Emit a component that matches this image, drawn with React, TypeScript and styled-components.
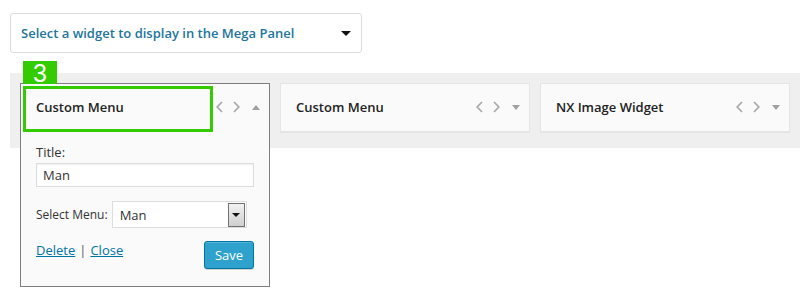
import React from "react";
import styled, { createGlobalStyle } from "styled-components";

const Global = createGlobalStyle`
  html, body { margin: 0; padding: 0; background: #fff; }
  body { font-family: "Open Sans", "Liberation Sans", sans-serif; color: #444; }
  * { box-sizing: border-box; }
`;

const Page = styled.div`
  width: 800px;
  height: 303px;
  overflow: hidden;
  padding-top: 13px;
`;

const TopSelect = styled.div`
  margin-left: 10px;
  width: 352px;
  height: 40px;
  border: 1px solid #dcdcdc;
  border-radius: 3px;
  display: flex;
  align-items: center;
  justify-content: space-between;
  padding: 0 10px 0 10px;
  font-size: 13px;
  font-weight: 600;
  color: #21759b;
`;

const Caret = styled.span<{ $up?: boolean; $color?: string; $w?: number }>`
  display: inline-block;
  width: 0;
  height: 0;
  border-left: ${(p) => (p.$w ?? 10) / 2}px solid transparent;
  border-right: ${(p) => (p.$w ?? 10) / 2}px solid transparent;
  ${(p) =>
    p.$up
      ? `border-bottom: ${Math.round((p.$w ?? 10) / 2)}px solid ${p.$color ?? "#111"};`
      : `border-top: ${Math.round((p.$w ?? 10) / 2)}px solid ${p.$color ?? "#111"};`}
`;

const Band = styled.div`
  margin-top: 20px;
  margin-left: 10px;
  height: 75px;
  background: #efefef;
  padding: 10px 0 0 10px;
  display: flex;
  align-items: flex-start;
  gap: 10px;
`;

const Widget = styled.div<{ $open?: boolean }>`
  position: relative;
  width: 250px;
  flex: none;
  background: #fafafa;
  border: 1px solid ${(p) => (p.$open ? "#7e7e7e" : "#e5e5e5")};
  box-shadow: ${(p) => (p.$open ? "none" : "0 1px 1px rgba(0,0,0,0.04)")};
`;

const Header = styled.div`
  height: 47px;
  display: flex;
  align-items: center;
  padding: 0 9px 1px 15px;
`;

const HeaderTitle = styled.div`
  flex: 1;
  font-size: 13px;
  font-weight: 600;
  color: #222;
`;

const Controls = styled.div`
  display: flex;
  align-items: center;
  gap: 10px;
`;

const Chevron = styled.svg`
  width: 7px;
  height: 12px;
  display: block;
`;

const CaretBox = styled.span`
  display: flex;
  margin-left: 2px;
`;

const Badge = styled.div`
  position: absolute;
  left: 2px;
  top: -23px;
  width: 34px;
  height: 23px;
  background: #33cc00;
  color: #fff;
  font-family: "Liberation Sans", Arial, sans-serif;
  font-size: 25px;
  line-height: 24px;
  text-align: center;
`;

const Highlight = styled.div`
  position: absolute;
  left: 2px;
  top: 2px;
  width: 190px;
  height: 46px;
  border: 3px solid #33cc00;
  pointer-events: none;
`;

const Body = styled.div`
  padding: 13px 15px 17px 15px;
  font-size: 13px;
  color: #333;
`;

const Label = styled.div`
  line-height: 16px;
  margin-bottom: 3px;
`;

const TextInput = styled.div`
  height: 24px;
  border: 1px solid #dddddd;
  background: #fff;
  padding: 0 6px;
  display: flex;
  align-items: center;
  color: #333;
  box-shadow: inset 0 1px 2px rgba(0,0,0,0.07);
`;

const Row = styled.div`
  display: flex;
  align-items: center;
  margin-top: 14px;
  gap: 4px;
`;

const RowLabel = styled.span`
  font-size: 12px;
`;

const SelectBox = styled.div`
  width: 135px;
  height: 27px;
  border: 1px solid #dddddd;
  background: #fff;
  display: flex;
  align-items: center;
  padding-left: 7px;
  padding-right: 1px;
`;

const SelectText = styled.span`
  flex: 1;
`;

const SelectButton = styled.div`
  width: 17px;
  height: 24px;
  border: 1px solid #707070;
  background: linear-gradient(#f2f2f2, #cfcfcf);
  display: flex;
  align-items: center;
  justify-content: center;
`;

const Footer = styled.div`
  display: flex;
  justify-content: space-between;
  align-items: flex-start;
  margin-top: 13px;
`;

const Links = styled.div`
  display: flex;
  gap: 4px;
  color: #555;
  line-height: 18px;
`;

const Link = styled.a`
  color: #0074a2;
  text-decoration: underline;
  cursor: pointer;
`;

const SaveButton = styled.button`
  width: 50px;
  height: 28px;
  margin-top: 0;
  background: #2ea2cc;
  border: 1px solid #0074a2;
  border-radius: 3px;
  color: #fff;
  font-family: "Open Sans", "Liberation Sans", sans-serif;
  font-size: 13px;
  padding: 0;
  box-shadow: inset 0 1px 0 rgba(120,200,230,0.5), 0 1px 0 rgba(0,0,0,0.15);
`;

function ArrowControls({ up }: { up?: boolean }) {
  return (
    <Controls>
      <Chevron viewBox="0 0 7 12">
        <path d="M6 1 L1.2 6 L6 11" fill="none" stroke="#a9a9a9" strokeWidth="1.7" />
      </Chevron>
      <Chevron viewBox="0 0 7 12">
        <path d="M1 1 L5.8 6 L1 11" fill="none" stroke="#a9a9a9" strokeWidth="1.7" />
      </Chevron>
      <CaretBox>
        <Caret $up={up} $color="#a0a0a0" $w={9} />
      </CaretBox>
    </Controls>
  );
}

export default function App() {
  return (
    <Page>
      <Global />
      <TopSelect>
        <span>Select a widget to display in the Mega Panel</span>
        <Caret $w={10} $color="#111" />
      </TopSelect>
      <Band>
        <Widget $open>
          <Badge>3</Badge>
          <Highlight />
          <Header>
            <HeaderTitle>Custom Menu</HeaderTitle>
            <ArrowControls up />
          </Header>
          <Body>
            <Label>Title:</Label>
            <TextInput>Man</TextInput>
            <Row>
              <RowLabel>Select Menu:</RowLabel>
              <SelectBox>
                <SelectText>Man</SelectText>
                <SelectButton>
                  <Caret $w={8} $color="#111" />
                </SelectButton>
              </SelectBox>
            </Row>
            <Footer>
              <Links>
                <Link>Delete</Link>
                <span>|</span>
                <Link>Close</Link>
              </Links>
              <SaveButton>Save</SaveButton>
            </Footer>
          </Body>
        </Widget>
        <Widget>
          <Header>
            <HeaderTitle>Custom Menu</HeaderTitle>
            <ArrowControls />
          </Header>
        </Widget>
        <Widget>
          <Header>
            <HeaderTitle>NX Image Widget</HeaderTitle>
            <ArrowControls />
          </Header>
        </Widget>
      </Band>
    </Page>
  );
}
